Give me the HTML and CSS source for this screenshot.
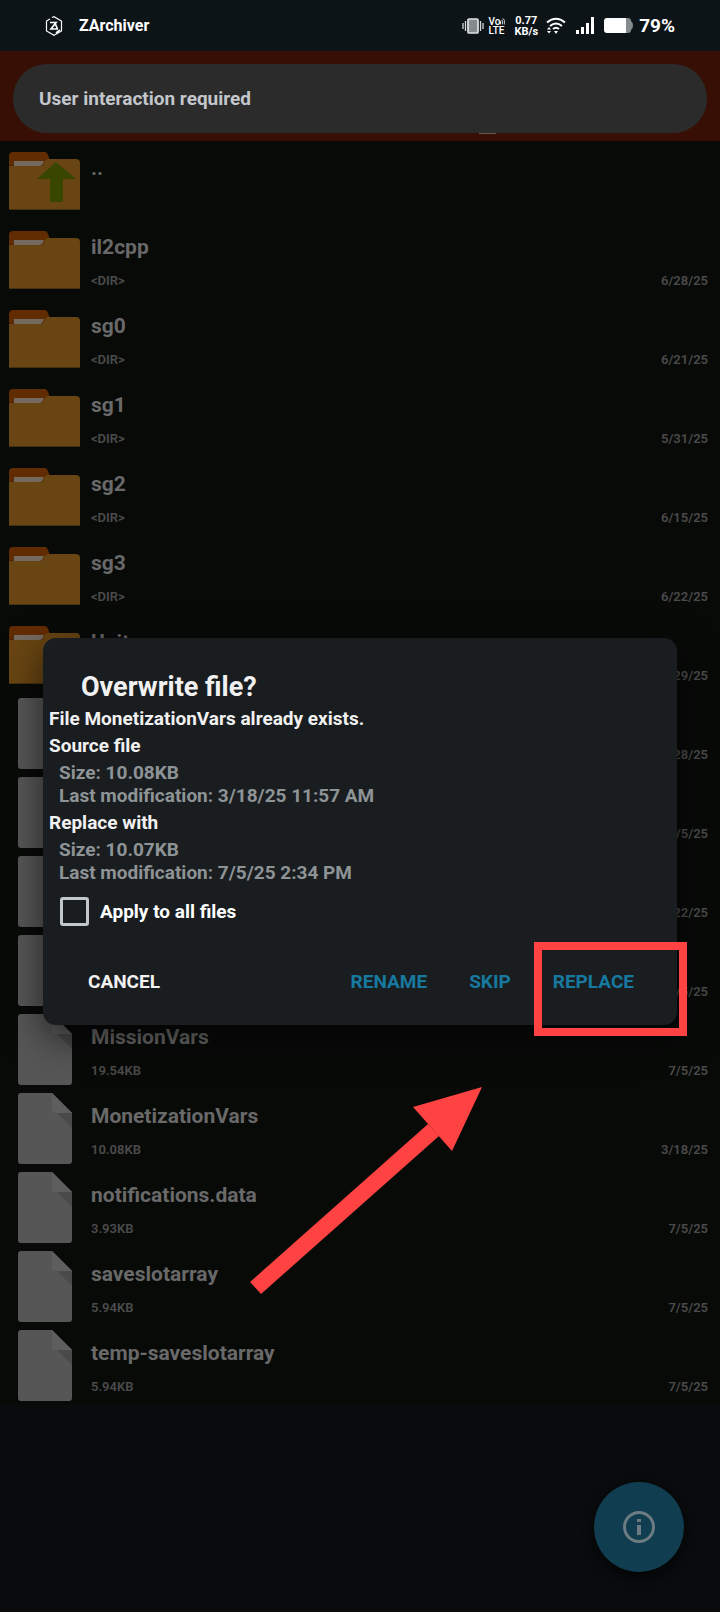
FILE: index.html
```html
<!DOCTYPE html>
<html lang="en">
<head>
<meta charset="utf-8">
<meta name="viewport" content="width=device-width, initial-scale=1">
<title>ZArchiver</title>
<link rel="stylesheet" href="styles.css">
</head>
<body>
<svg class="defs" aria-hidden="true">
  <symbol id="folder" viewBox="0 0 72 60">
    <path fill="#622c02" d="M1 4q0-4 4-4h32q2 0 3 3l3 8v20H1z"/>
    <path fill="#4c250b" d="M1 13h40v3H1z"/>
    <path fill="#684512" d="M1 14h32q2 0 3-3l1-2q1-2 4-2h27q4 0 4 4v47H1z"/>
    <path fill="#73695f" d="M6 9h30l-2 4q-1 1-3 1H6z"/>
    <path fill="#463111" d="M1 57h71v1H1z"/>
  </symbol>
  <symbol id="file" viewBox="0 0 54 72">
    <path fill="#565656" d="M3 0h31l20 20v48q0 3-3 3H3q-3 0-3-3V3q0-3 3-3z"/>
    <path fill="#4a4a4a" d="M38 19h16v16z"/>
    <path fill="#5e5e5e" d="M34 0l20 20H37q-3 0-3-3z"/>
  </symbol>
</svg>
<div class="screen">
  <header class="status">
    <svg class="app-logo" viewBox="0 0 18 20" fill="none" stroke="#fff"><path d="M7 1.500L9 .7l7.500 4.400v9.800L9 19.200l-7.500-4.300V5.100L5 3" stroke-width="1.200"/><path d="M5 6.500h6L6 13h7M9.500 6l3 7M11 17l4-3" stroke-width="1.700"/></svg>
    <span class="app-name">ZArchiver</span>
    <div class="status-icons">
      <svg class="vibrate" viewBox="0 0 22 16"><path d="M1 5v6M3.500 3v10M18.500 3v10M21 5v6" stroke="#d5d8d9" stroke-width="1.300"/><rect x="6" y="1" width="10" height="14" rx="1" fill="#858b8d" stroke="#dfe2e3" stroke-width="1.700"/></svg>
      <span class="volte"><span>Vo<svg class="wave" viewBox="0 0 6 7" fill="none" stroke="#fff"><path d="M.6 7V3M2.800 7V3q0-1-1-1M5.200 7V2Q5 .5 3 .5"/></svg></span><span>LTE</span></span>
      <span class="speed"><span>0.77</span><span>KB/s</span></span>
      <svg class="wifi" viewBox="0 0 20 18" fill="none" stroke="#fff" stroke-width="2"><path d="M1 5.500Q10-2 19 5.500M4 9q6-5 12 0M7 12q3-2.500 6 0"/><path d="M8 14h4l-2 3zM1 12.500l2-2.500 2 2.500zM1 14h4l-2 2.500z" fill="#fff" stroke="none"/></svg>
      <svg class="signal" viewBox="0 0 19 17" fill="#fff"><path d="M0 13h3v4H0zM5 10h3v7H5zM10 6h3v11h-3z"/><path d="M15 0h3v17h-3z"/></svg>
      <svg class="battery" viewBox="0 0 29 15"><path fill="#858a8c" d="M20 0h4q3 0 3 3 2 1 2 4.500T27 12q0 3-3 3h-4z"/><path fill="#fff" d="M3 0h19v15H3q-3 0-3-3V3q0-3 3-3z"/></svg>
      <span class="percent">79%</span>
    </div>
  </header>
  <div class="toolbar">
    <div class="toast" role="status">User interaction required</div>
  </div>
  <main class="content">
    <ul class="files">
      <li class="row"><svg class="icon" viewBox="0 0 72 60"><use href="#folder"/><path fill="#384600" d="M48 10l20 17H55v23H42V27H29z"/></svg><span class="name">..</span></li>
      <li class="row"><svg class="icon"><use href="#folder"/></svg><span class="name">il2cpp</span><span class="meta">&lt;DIR&gt;</span><time class="date">6/28/25</time></li>
      <li class="row"><svg class="icon"><use href="#folder"/></svg><span class="name">sg0</span><span class="meta">&lt;DIR&gt;</span><time class="date">6/21/25</time></li>
      <li class="row"><svg class="icon"><use href="#folder"/></svg><span class="name">sg1</span><span class="meta">&lt;DIR&gt;</span><time class="date">5/31/25</time></li>
      <li class="row"><svg class="icon"><use href="#folder"/></svg><span class="name">sg2</span><span class="meta">&lt;DIR&gt;</span><time class="date">6/15/25</time></li>
      <li class="row"><svg class="icon"><use href="#folder"/></svg><span class="name">sg3</span><span class="meta">&lt;DIR&gt;</span><time class="date">6/22/25</time></li>
      <li class="row"><svg class="icon"><use href="#folder"/></svg><span class="name">Unity</span><time class="date">6/29/25</time></li>
      <li class="row"><svg class="icon file"><use href="#file"/></svg><time class="date">6/28/25</time></li>
      <li class="row"><svg class="icon file"><use href="#file"/></svg><time class="date">7/5/25</time></li>
      <li class="row"><svg class="icon file"><use href="#file"/></svg><time class="date">6/22/25</time></li>
      <li class="row"><svg class="icon file"><use href="#file"/></svg><time class="date">7/5/25</time></li>
      <li class="row"><svg class="icon file"><use href="#file"/></svg><span class="name">MissionVars</span><span class="meta">19.54KB</span><time class="date">7/5/25</time></li>
      <li class="row"><svg class="icon file"><use href="#file"/></svg><span class="name">MonetizationVars</span><span class="meta">10.08KB</span><time class="date">3/18/25</time></li>
      <li class="row"><svg class="icon file"><use href="#file"/></svg><span class="name">notifications.data</span><span class="meta">3.93KB</span><time class="date">7/5/25</time></li>
      <li class="row"><svg class="icon file"><use href="#file"/></svg><span class="name">saveslotarray</span><span class="meta">5.94KB</span><time class="date">7/5/25</time></li>
      <li class="row"><svg class="icon file"><use href="#file"/></svg><span class="name">temp-saveslotarray</span><span class="meta">5.94KB</span><time class="date">7/5/25</time></li>
    </ul>
  </main>
  <button class="fab" aria-label="Info"><svg viewBox="0 0 32 32"><circle cx="16" cy="16" r="14.500" fill="none" stroke="#6d7b82" stroke-width="3"/><path fill="#6d7b82" d="M14 8h4v3h-4zM14 14h4v10h-4z"/></svg></button>
  <div class="overlay">
    <section class="dialog" role="dialog" aria-labelledby="title">
      <h1 id="title">Overwrite file?</h1>
      <p class="line">File MonetizationVars already exists.</p>
      <p class="line">Source file</p>
      <p class="details">Size: 10.08KB<br>Last modification: 3/18/25 11:57 AM</p>
      <p class="line">Replace with</p>
      <p class="details">Size: 10.07KB<br>Last modification: 7/5/25 2:34 PM</p>
      <label class="apply"><input type="checkbox">Apply to all files</label>
      <div class="actions">
        <button class="cancel">CANCEL</button>
        <button>RENAME</button>
        <button>SKIP</button>
        <button>REPLACE</button>
      </div>
      <div class="highlight"></div>
      <svg class="arrow" viewBox="0 0 232 207" fill="#ff4343"><path d="M0 195L178 37l11 12L11 207z"/><path d="M232 0l-69 20 39 44z"/></svg>
    </section>
  </div>
</div>
</body>
</html>
```
FILE: styles.css
```css
* { box-sizing: border-box; }
body {
  margin: 0;
  background: #090b0d;
  font-family: Roboto, sans-serif;
  font-weight: 700;
}
button { border: 0; padding: 0; background: none; font: inherit; color: inherit; }
svg { display: block; flex: none; }
.defs { position: absolute; width: 0; height: 0; }
.screen {
  position: relative;
  display: flex;
  flex-direction: column;
  min-height: 100vh;
  overflow: hidden;
}

.status {
  display: flex;
  align-items: center;
  height: 51px;
  padding: 0 45px;
  background: #0d1418;
  color: #fff;
}
.app-logo { width: 18px; height: 20px; }
.app-name { margin-left: 16px; font-size: 16px; }
.status-icons { display: flex; align-items: center; margin-left: auto; }
.vibrate { width: 22px; height: 16px; }
.volte, .speed { display: flex; flex-direction: column; }
.volte { margin-left: 4px; font-size: 10px; font-weight: 500; line-height: 9px; }
.wave { display: inline-block; width: 5px; height: 7px; }
.speed { align-items: center; margin-left: 9px; font-size: 11px; line-height: 11px; }
.wifi { width: 20px; height: 18px; margin-left: 8px; }
.signal { width: 19px; height: 17px; margin-left: 10px; }
.battery { width: 29px; height: 15px; margin-left: 9px; }
.percent { margin-left: 6px; font-size: 19px; }

.toolbar { position: relative; height: 90px; padding: 13px; background: #370f05; }
.toolbar::after {
  content: "";
  position: absolute;
  right: 224px;
  bottom: 7px;
  width: 17px;
  height: 1px;
  background: #6a5550;
}
.toast {
  display: flex;
  align-items: center;
  height: 69px;
  padding: 0 26px;
  border-radius: 34px;
  background: #2b2b2b;
  color: #c3c7cb;
  font-size: 19px;
}

.files { margin: 0; padding: 0; list-style: none; background: #080a08; }
.row {
  display: grid;
  grid-template-columns: 83px 1fr auto;
  grid-template-rows: 45px 24px;
  height: 79px;
  padding: 4px 12px 0 8px;
}
.icon { grid-row: 1 / 3; width: 72px; height: 60px; margin-top: 7px; }
.icon.file { width: 54px; height: 72px; margin: 0 0 0 10px; }
.name { grid-column: 2 / 4; padding-top: 9px; color: #696969; font-size: 21px; line-height: 28px; }
.meta, .date { color: #4b4b4b; font-size: 13px; font-weight: 600; line-height: 24px; }
.meta { grid-area: 2 / 2; }
.date { grid-area: 2 / 3; }

.fab {
  position: absolute;
  right: 36px;
  bottom: 40px;
  display: grid;
  place-items: center;
  width: 90px;
  height: 90px;
  border-radius: 50%;
  background: #103e50;
  box-shadow: 0 5px 12px #040506;
}
.fab svg { width: 32px; height: 32px; }

.overlay {
  position: absolute;
  inset: 51px 0 0;
  display: flex;
  align-items: center;
  padding: 0 43px;
}
.dialog {
  position: relative;
  flex: 1;
  padding: 34px 6px 20px;
  border-radius: 13px;
  background: #191d20;
  color: #f1f1f1;
  font-size: 19px;
  line-height: 23px;
  box-shadow: 0 12px 36px rgba(0, 0, 0, 0.6);
}
h1 { margin: 0; padding-left: 32px; font-size: 27px; line-height: 31px; }
.line { margin: 0; padding-top: 4px; }
.details { margin: 0; padding: 4px 10px 0; color: #8e9396; }
.apply { display: flex; align-items: center; gap: 11px; margin: 13px 11px 0; height: 29px; color: #fff; }
.apply input {
  appearance: none;
  width: 29px;
  height: 29px;
  margin: 0;
  border: 3px solid #c2c7ce;
  border-radius: 3px;
}
.actions { display: flex; gap: 42px; height: 48px; margin: 31px 37px 0 39px; color: #17799f; }
.cancel { margin-right: auto; color: #f1f1f1; }

.highlight {
  position: absolute;
  right: -10px;
  bottom: -11px;
  width: 153px;
  height: 94px;
  border: 8px solid #ff4343;
}
.arrow { position: absolute; top: calc(100% + 62px); left: 207px; width: 232px; height: 207px; }
```
